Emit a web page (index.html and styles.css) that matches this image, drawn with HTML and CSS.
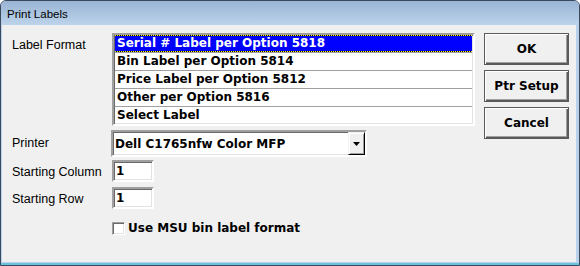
FILE: index.html
```html
<!DOCTYPE html>
<html>
<head>
<meta charset="utf-8">
<link rel="stylesheet" href="styles.css">
</head>
<body>
<div class="window">
  <div class="titlebar">Print Labels</div>
  <div class="client">
    <div class="form">
      <div class="lbl lbl-format">Label Format</div>
      <div class="listbox">
        <div class="item sel">Serial # Label per Option 5818</div>
        <div class="item">Bin Label per Option 5814</div>
        <div class="item">Price Label per Option 5812</div>
        <div class="item">Other per Option 5816</div>
        <div class="item last">Select Label</div>
      </div>

      <div class="lbl lbl-printer">Printer</div>
      <div class="combo">
        <span class="combo-text">Dell C1765nfw Color MFP</span>
        <span class="drop"><svg width="7" height="4" viewBox="0 0 7 4"><path d="M0 0h7L3.5 4z" fill="#000"/></svg></span>
      </div>

      <div class="lbl lbl-col">Starting Column</div>
      <div class="edit edit-col">1</div>

      <div class="lbl lbl-row">Starting Row</div>
      <div class="edit edit-row">1</div>

      <div class="spacer"></div>
      <div class="check"><span class="box"></span><span class="check-text">Use MSU bin label format</span></div>
    </div>
    <div class="buttons">
      <div class="btn">OK</div>
      <div class="btn">Ptr Setup</div>
      <div class="btn">Cancel</div>
    </div>
  </div>
</div>
</body>
</html>
```

FILE: styles.css
```css
html, body {
  margin: 0;
  padding: 0;
  background: #ffffff;
}

.window {
  width: 580px;
  height: 266px;
  box-sizing: border-box;
  border: 1px solid #3a4a5c;
  border-radius: 6px 6px 0 0;
  background: #b9d1ea;
  display: flex;
  flex-direction: column;
  overflow: hidden;
  box-shadow: inset 0 -2px 0 #6cc4dc;
}

.titlebar {
  height: 24px;
  flex: none;
  background: linear-gradient(#99b4d4, #bcd3ea);
  font-family: "Liberation Sans", Arial, sans-serif;
  font-size: 11.5px;
  color: #000;
  line-height: 27px;
  padding-left: 6px;
}

.client {
  flex: 1;
  margin: 0 3px 3px 1px;
  background: #f0f0f0;
  display: flex;
  align-items: flex-start;
  padding: 8px 0 0 10px;
  font-family: "DejaVu Sans", Verdana, sans-serif;
  font-size: 12px;
  color: #000;
}

.form {
  display: grid;
  grid-template-columns: 100px 363px;
  align-items: start;
}

.lbl {
  line-height: 14px;
  font-family: "Liberation Sans", Arial, sans-serif;
  font-size: 12.5px;
}

.lbl-format { padding-top: 5px; }
.lbl-printer { margin-top: 10px; }
.lbl-col { margin-top: 4px; padding-top: 4px; }
.lbl-row { margin-top: 5px; padding-top: 5px; }

.listbox {
  box-sizing: border-box;
  width: 363px;
  border: 2px solid;
  border-color: #a0a0a0 #ffffff #ffffff #a0a0a0;
  box-shadow: inset 1px 1px 0 #696969, inset -1px -1px 0 #e3e3e3;
  background: #fff;
  padding: 0 1px 0 1px;
}

.item {
  height: 17px;
  line-height: 17px;
  border-bottom: 1px solid #a0a0a0;
  font-weight: bold;
  padding-left: 2px;
  white-space: nowrap;
}

.item.last {
  border-bottom: none;
}

.item.sel {
  background: #0000ff;
  color: #ffffff;
  position: relative;
}

.item.sel::before {
  content: "";
  position: absolute;
  inset: 0;
  background:
    linear-gradient(90deg, #ffff00 50%, #000 50%) top left / 2px 1px repeat-x,
    linear-gradient(90deg, #ffff00 50%, #000 50%) bottom left / 2px 1px repeat-x;
}

.combo {
  margin-top: 4px;
  box-sizing: border-box;
  width: 256px;
  height: 27px;
  margin-left: -1px;
  border: 2px solid;
  border-color: #a0a0a0 #ffffff #ffffff #a0a0a0;
  box-shadow: inset 1px 1px 0 #696969, inset -1px -1px 0 #e3e3e3;
  background: #fff;
  display: flex;
  align-items: center;
  justify-content: space-between;
  font-weight: bold;
}

.combo-text {
  padding-left: 2px;
  white-space: nowrap;
}

.drop {
  box-sizing: border-box;
  width: 17px;
  height: 23px;
  background: #f0f0f0;
  border: 1px solid;
  border-color: #f0f0f0 #000 #000 #f0f0f0;
  box-shadow: inset 1px 1px 0 #fff, inset -1px -1px 0 #a0a0a0;
  display: flex;
  align-items: center;
  justify-content: center;
}

.edit {
  box-sizing: border-box;
  width: 42px;
  height: 22px;
  border: 2px solid;
  border-color: #a0a0a0 #ffffff #ffffff #a0a0a0;
  box-shadow: inset 1px 1px 0 #696969, inset -1px -1px 0 #e3e3e3;
  background: #fff;
  font-weight: bold;
  line-height: 18px;
  padding-left: 2px;
}

.edit-col { margin-top: 3px; }
.edit-row { margin-top: 5px; }

.check {
  margin-top: 12px;
  display: flex;
  align-items: center;
  font-weight: bold;
}

.box {
  box-sizing: border-box;
  width: 13px;
  height: 13px;
  border: 1px solid;
  border-color: #a0a0a0 #ffffff #ffffff #a0a0a0;
  box-shadow: inset 1px 1px 0 #696969, inset -1px -1px 0 #e3e3e3;
  background: #fff;
  margin-right: 3px;
}

.buttons {
  margin-left: 9px;
  display: flex;
  flex-direction: column;
  gap: 5px;
}

.btn {
  box-sizing: border-box;
  width: 85px;
  height: 32px;
  border: 1px solid #5a5a5a;
  box-shadow: inset 1px 1px 0 #ffffff, inset -1px -1px 0 #5a5a5a, inset -2px -2px 0 #a0a0a0;
  background: #f0f0f0;
  font-family: "DejaVu Sans", Verdana, sans-serif;
  font-weight: bold;
  font-size: 12px;
  display: flex;
  align-items: center;
  justify-content: center;
}
```
